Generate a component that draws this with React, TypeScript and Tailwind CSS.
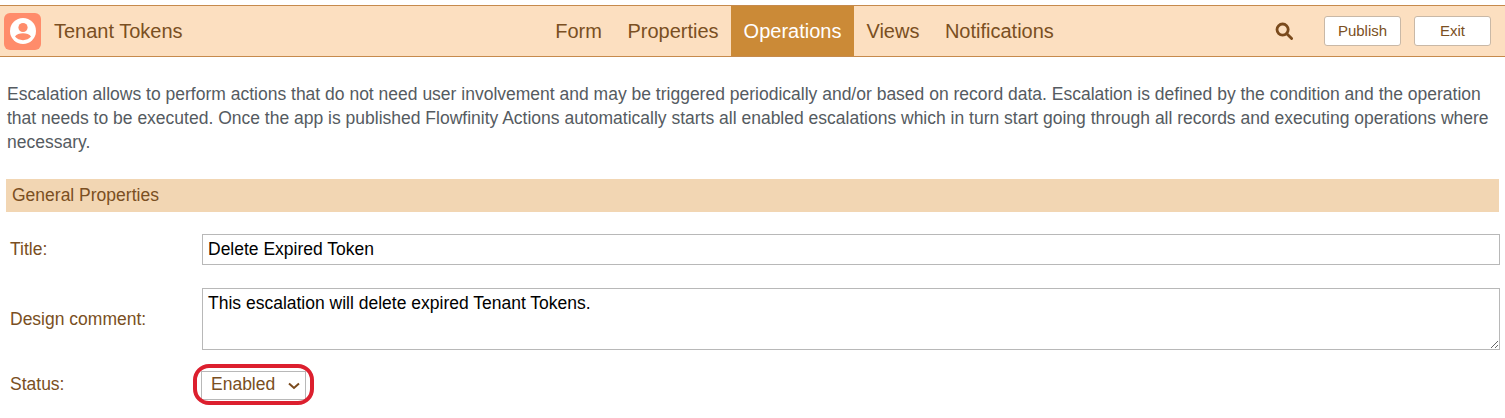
import React from "react";

const navItems = ["Form", "Properties", "Operations", "Views", "Notifications"];

export default function App() {
  return (
    <div className="w-[1505px] h-[418px] overflow-hidden bg-white pt-[5px] font-['Liberation_Sans',Arial,sans-serif] text-[#7a4f22]">
      <header className="flex h-[52px] items-stretch border-y border-[#c68a4c] bg-[#fcdfc0]">
        <div className="flex w-[542.5px] items-center pl-1">
          <div className="flex h-[37px] w-[37px] items-center justify-center rounded-md bg-[#ff8c6b]">
            <svg viewBox="0 0 26 26" className="h-[26px] w-[26px]">
              <circle cx="13" cy="13" r="13" fill="#ffffff" />
              <circle cx="13" cy="9.5" r="4.6" fill="#ff8c6b" />
              <path d="M5 18.6c1.5-2.4 4.6-3.4 8-3.4s6.5 1 8 3.4c-1.8 2.2-4.7 3.6-8 3.6s-6.2-1.4-8-3.6z" fill="#ff8c6b" />
            </svg>
          </div>
          <span className="ml-[13px] text-xl">Tenant Tokens</span>
        </div>
        <nav className="flex">
          {navItems.map((item) => (
            <div
              key={item}
              className={
                item === "Operations"
                  ? "flex items-center bg-[#cb8a37] px-[12.25px] text-xl text-white"
                  : "flex items-center px-[12.75px] text-xl"
              }
            >
              {item}
            </div>
          ))}
        </nav>
        <div className="ml-auto flex items-center pr-[14px]">
          <svg viewBox="0 0 18 18" className="mr-[31px] h-[18px] w-[18px]" fill="none" stroke="#7a4a1c" strokeWidth="2.8">
            <circle cx="7.6" cy="7.6" r="5.6" />
            <path d="M11.8 11.8l4.8 4.8" strokeLinecap="round" />
          </svg>
          <button className="h-[30px] w-[77px] rounded-[3px] border border-[#c9b8a6] bg-white text-[15px] text-[#7a4f22]">Publish</button>
          <button className="ml-[13px] h-[30px] w-[77px] rounded-[3px] border border-[#c9b8a6] bg-white text-[15px] text-[#7a4f22]">Exit</button>
        </div>
      </header>

      <p className="mt-[25px] px-[7px] text-[17.5px] leading-[24px] text-[#555b61]">
        Escalation allows to perform actions that do not need user involvement and may be triggered periodically and/or based on record data. Escalation is defined by the condition and the operation that needs to be executed. Once the app is published Flowfinity Actions automatically starts all enabled escalations which in turn start going through all records and executing operations where necessary.
      </p>

      <div className="mx-[6px] mt-[25px] flex h-[33px] items-center bg-[#f2d6b3] px-[6px] text-[17.5px]">General Properties</div>

      <div className="mt-[22px] flex items-center pl-[10px] pr-[5px]">
        <label className="w-[192px] text-[17.5px]">Title:</label>
        <input
          readOnly
          value="Delete Expired Token"
          className="h-[31px] flex-1 border border-[#b8b8b8] bg-white px-[5px] text-[17.5px] text-black outline-none"
        />
      </div>

      <div className="mt-[23px] flex items-center pl-[10px] pr-[5px]">
        <label className="w-[192px] pt-[1px] text-[17.5px]">Design comment:</label>
        <textarea
          readOnly
          value="This escalation will delete expired Tenant Tokens."
          className="h-[62px] flex-1 border border-[#b8b8b8] bg-white px-[5px] py-0 text-[17.5px] leading-[28px] text-black outline-none"
        />
      </div>

      <div className="mt-[21px] flex items-center pl-[10px]">
        <label className="w-[191px] pb-[2px] text-[17.5px]">Status:</label>
        <div className="relative flex h-[29px] w-[105px] items-center border border-[#b8b8b8] bg-white pb-[2px] pl-[9px] text-[17.5px]">
          Enabled
          <svg viewBox="0 0 12 8" className="absolute right-[5px] top-[10px] h-[8px] w-[12px]" fill="none" stroke="#7a4a1c" strokeWidth="2">
            <path d="M1 1.5l5 4.5 5-4.5" />
          </svg>
          <div className="absolute -left-[9px] -top-[8px] h-[41px] w-[121px] rounded-[16px] border-[4px] border-[#dc1f2e]" />
        </div>
      </div>
    </div>
  );
}
